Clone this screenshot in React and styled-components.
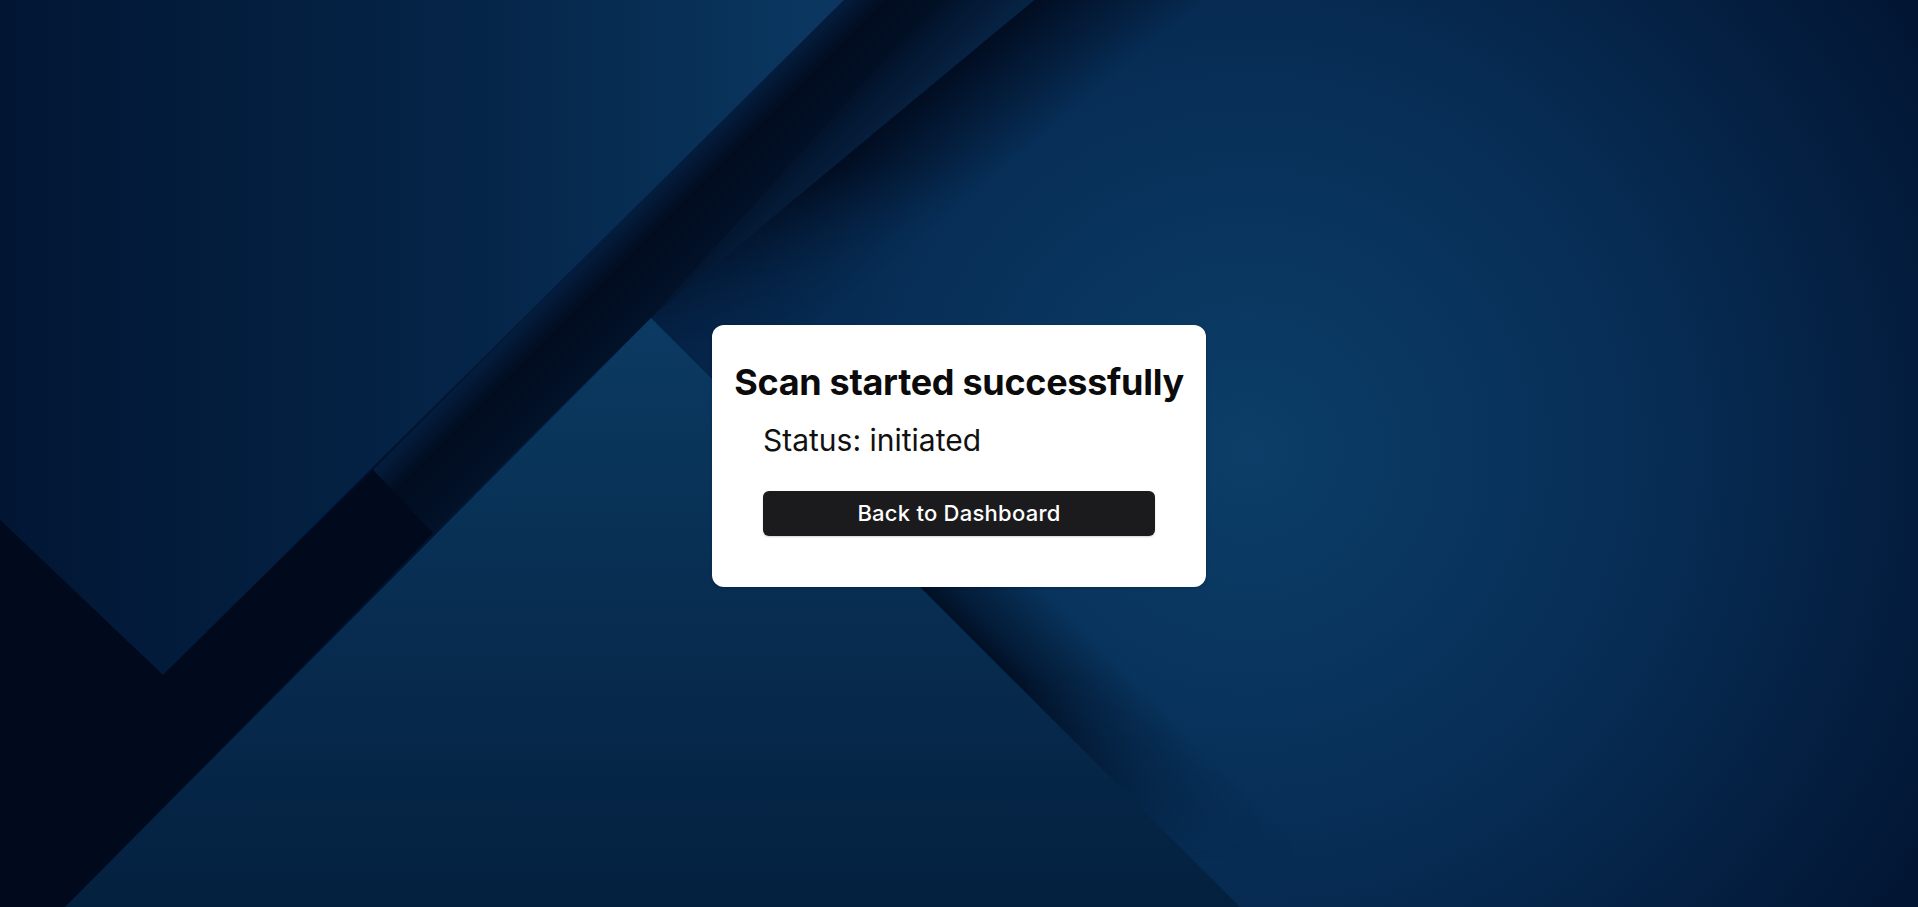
import React from 'react';
import styled, { createGlobalStyle } from 'styled-components';

const GlobalStyle = createGlobalStyle`
  html, body {
    margin: 0;
    padding: 0;
    height: 100%;
    background: #031a38;
  }
  #root {
    height: 100%;
  }
`;

const Page = styled.div`
  position: relative;
  width: 100%;
  height: 100vh;
  box-sizing: border-box;
  padding-top: 5px;
  overflow: hidden;
  display: flex;
  align-items: center;
  justify-content: center;
  font-family: Inter, 'Noto Sans', sans-serif;
`;

const Backdrop = styled.svg`
  position: absolute;
  inset: 0;
  width: 100%;
  height: 100%;
  z-index: 0;
`;

const Card = styled.div`
  position: relative;
  z-index: 1;
  width: 494px;
  box-sizing: border-box;
  padding: 36px 51px 51px;
  background: #ffffff;
  border-radius: 12px;
  box-shadow: 0 1px 3px rgba(0, 0, 0, 0.25);
  display: flex;
  flex-direction: column;
  align-items: center;
`;

const Title = styled.h1`
  margin: 0;
  white-space: nowrap;
  font-size: 36px;
  font-weight: 700;
  letter-spacing: -0.3px;
  line-height: 1.2;
  color: #0b0b0c;
`;

const Status = styled.p`
  align-self: stretch;
  margin: 18px 0 0;
  font-size: 30px;
  font-weight: 400;
  line-height: 1.25;
  color: #111;
`;

const ActionButton = styled.button`
  align-self: stretch;
  margin-top: 31px;
  height: 45px;
  border: none;
  border-radius: 6px;
  background: #1b1b1d;
  color: #ffffff;
  font-family: inherit;
  font-size: 22px;
  font-weight: 500;
  letter-spacing: 0.25px;
  cursor: pointer;
  box-shadow: 0 1px 2px rgba(0, 0, 0, 0.18);
`;

// abstract navy backdrop: panels, a diagonal band and two soft shadows
function Background() {
  return (
    <Backdrop viewBox="0 0 1918 907" preserveAspectRatio="none">
      <defs>
        <radialGradient id="base" cx="1250" cy="450" r="900" gradientUnits="userSpaceOnUse">
          <stop offset="0" stopColor="#0b3e68" />
          <stop offset="0.45" stopColor="#072d55" />
          <stop offset="1" stopColor="#010f2a" />
        </radialGradient>
        <linearGradient id="panel" x1="0" y1="300" x2="800" y2="300" gradientUnits="userSpaceOnUse">
          <stop offset="0" stopColor="#021634" />
          <stop offset="0.6" stopColor="#052548" />
          <stop offset="1" stopColor="#0a365f" />
        </linearGradient>
        <linearGradient id="band" x1="422" y1="422" x2="485" y2="485" gradientUnits="userSpaceOnUse">
          <stop offset="0" stopColor="#041d3d" />
          <stop offset="0.35" stopColor="#010c1f" />
          <stop offset="1" stopColor="#021229" />
        </linearGradient>
        <linearGradient id="bandEdge" x1="470" y1="470" x2="517" y2="517" gradientUnits="userSpaceOnUse">
          <stop offset="0" stopColor="#0a3058" stopOpacity="0" />
          <stop offset="1" stopColor="#0a3058" stopOpacity="0.6" />
        </linearGradient>
        <linearGradient id="tri" x1="0" y1="318" x2="0" y2="907" gradientUnits="userSpaceOnUse">
          <stop offset="0" stopColor="#0b3a62" />
          <stop offset="1" stopColor="#04203f" />
        </linearGradient>

        <linearGradient id="topShade" x1="842" y1="159" x2="912" y2="243" gradientUnits="userSpaceOnUse">
          <stop offset="0" stopColor="#010a1c" stopOpacity="0.9" />
          <stop offset="0.35" stopColor="#010a1c" stopOpacity="0.55" />
          <stop offset="1" stopColor="#010a1c" stopOpacity="0" />
        </linearGradient>
        <linearGradient id="topFade" x1="0" y1="0" x2="0" y2="340" gradientUnits="userSpaceOnUse">
          <stop offset="0" stopColor="#fff" />
          <stop offset="0.5" stopColor="#fff" />
          <stop offset="1" stopColor="#000" />
        </linearGradient>
        <mask id="topMask" maskUnits="userSpaceOnUse" x="0" y="0" width="1918" height="907">
          <rect x="0" y="0" width="1918" height="907" fill="url(#topFade)" />
        </mask>

        <linearGradient id="triShade" x1="1000" y1="667" x2="1060" y2="607" gradientUnits="userSpaceOnUse">
          <stop offset="0" stopColor="#010d20" stopOpacity="0.9" />
          <stop offset="0.3" stopColor="#010d20" stopOpacity="0.55" />
          <stop offset="1" stopColor="#010d20" stopOpacity="0" />
        </linearGradient>
        <linearGradient id="triFade" x1="0" y1="560" x2="0" y2="860" gradientUnits="userSpaceOnUse">
          <stop offset="0" stopColor="#fff" />
          <stop offset="0.4" stopColor="#fff" />
          <stop offset="1" stopColor="#000" />
        </linearGradient>
        <mask id="triMask" maskUnits="userSpaceOnUse" x="0" y="0" width="1918" height="907">
          <rect x="0" y="0" width="1918" height="907" fill="url(#triFade)" />
        </mask>
      </defs>

      <rect x="0" y="0" width="1918" height="907" fill="url(#base)" />
      <polygon points="0,0 844,0 163,675 0,520" fill="url(#panel)" />

      <polygon points="1034,0 1600,0 1600,340 651,340 651,318" fill="url(#topShade)" mask="url(#topMask)" />

      <polygon points="844,0 1034,0 651,318 433,533 373,470" fill="url(#band)" />
      <polygon points="940,0 1034,0 651,318" fill="url(#bandEdge)" />
      <polygon points="373,470 433,533 65,907 0,907 0,520 163,675" fill="#010a1c" />

      <polygon points="651,318 1240,907 65,907" fill="url(#tri)" />

      <polygon points="860,527 1250,917 1500,527" fill="url(#triShade)" mask="url(#triMask)" />
    </Backdrop>
  );
}

export default function App() {
  return (
    <>
      <GlobalStyle />
      <Page>
        <Background />
        <Card>
          <Title>Scan started successfully</Title>
          <Status>Status: initiated</Status>
          <ActionButton type="button">Back to Dashboard</ActionButton>
        </Card>
      </Page>
    </>
  );
}
